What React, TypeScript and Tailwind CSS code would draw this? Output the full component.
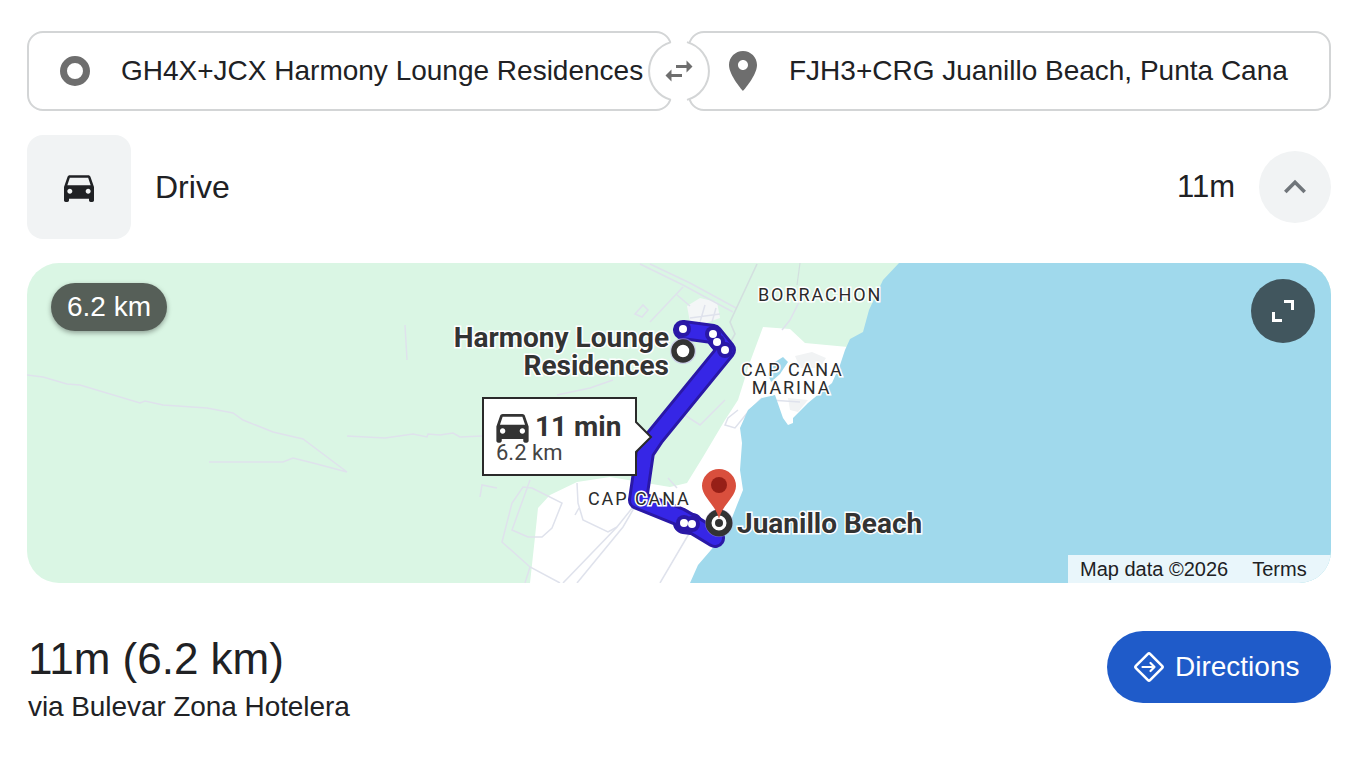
import React from "react";

const CAR =
  "M18.92 6.01C18.72 5.42 18.16 5 17.5 5h-11c-.66 0-1.21.42-1.42 1.01L3 12v8c0 .55.45 1 1 1h1c.55 0 1-.45 1-1v-1h12v1c0 .55.45 1 1 1h1c.55 0 1-.45 1-1v-8l-2.08-5.99zM6.5 16c-.83 0-1.5-.67-1.5-1.5S5.67 13 6.5 13s1.5.67 1.5 1.5S7.33 16 6.5 16zm11 0c-.83 0-1.5-.67-1.5-1.5s.67-1.5 1.5-1.5 1.5.67 1.5 1.5-.67 1.5-1.5 1.5zM5 11l1.5-4.5h11L19 11H5z";

function SwapBadge() {
  return (
    <svg width="64" height="64" viewBox="0 0 64 64" className="absolute left-1/2 top-1/2 -translate-x-1/2 -translate-y-1/2">
      <circle cx="32" cy="32" r="30" fill="#fff" />
      <path d="M24 3.1 A30 30 0 0 0 24 60.9" fill="none" stroke="#d3d5d6" strokeWidth="2" />
      <path d="M40 3.1 A30 30 0 0 1 40 60.9" fill="none" stroke="#d3d5d6" strokeWidth="2" />
      <g transform="translate(14 14) scale(1.5)">
        <path d="M6.99 11L3 15l3.99 4v-3H14v-2H6.99v-3zM21 9l-3.99-4v3H10v2h7.01v3L21 9z" fill="#6e6e6e" />
      </g>
    </svg>
  );
}

function MapDrawing() {
  const route = "M683 330 L713 334 L726 350 L655 437 L645 452 L638 500 L680 517 L692 524 L715 538";
  const roads: string[] = [
    "M27 375 L43 377 L67 384 L80 385 L140 403 L145 401 L163 405 L207 408 L233 413 L243 420 L273 432 L303 439 L347 472 L313 463 L293 458 L283 462 L209 462",
    "M347 436 L385 438 L413 434 L427 437 L428 434 L440 435 L453 433 L460 437 L482 436",
    "M640 264 L683 285 L733 312",
    "M650 264 L690 283 L736 308",
    "M683 287 L650 322",
    "M677 295 L690 306",
    "M700 322 L705 305 M712 322 L716 308 M690 318 L720 314",
    "M480 497 L482 485 L497 488",
    "M530 480 L512 530 L528 537 L542 537 L552 528 L562 503 L532 488 L523 487 L512 503 L502 542 L530 567 L560 583",
    "M530 567 L525 583",
    "M563 583 L617 527 L633 507",
    "M577 583 L623 527 L637 503",
    "M577 483 L578 503 L583 520 L608 532 L617 527",
    "M575 515 L579 508",
    "M660 583 L687 537 L695 525",
    "M668 478 L677 488",
    "M738 410 L728 418 L725 425 L735 428 L748 412 L762 398",
    "M770 400 L800 402",
    "M405 325 L407 360",
    "M557 395 L590 388 L613 380",
    "M725 400 L700 425 L680 412",
    "M800 300 L790 320 L782 330",
  ];
  return (
    <svg viewBox="27 263 1304 320" className="absolute inset-0 h-full w-full">
      <polygon
        fill="#ffffff"
        points="530,583 535,537 538,508 550,495 577,482 610,477 670,487 687,483 703,457 725,420 738,400 750,362 763,327 790,329 805,343 848,347 860,400 760,583"
      />
      <polygon fill="#f4f6f7" points="687,306 700,298 717,302 720,318 700,325 690,322" />
      <polygon fill="none" stroke="#dfe2ec" strokeWidth="1.6" points="635,314 643,305 648,310 642,317" />
      <polygon fill="#f1f3f4" points="795,356 812,352 826,358 820,368 800,368" />
      <polygon fill="#f1f3f4" points="788,398 808,400 798,412 790,410" />
      {roads.map((d, i) => (
        <path key={i} d={d} fill="none" stroke="#dfe2ec" strokeWidth="1.5" />
      ))}
      <path d="M757 264 L730 322 L735 334 L730 343" fill="none" stroke="#d3dfdf" strokeWidth="1.6" />
      <path d="M800 263 L797 285" fill="none" stroke="#d3dfdf" strokeWidth="1.2" />
      <polygon
        fill="#a0d9ec"
        points="899,263 883,280 869,310 863,332 850,339 845,350 840,365 832,383 808,403 793,418 793,423 788,425 783,418 775,395 762,398 748,410 740,428 742,443 740,470 743,490 737,505 730,523 717,543 698,565 690,583 1331,583 1331,263"
      />
      <path d="M775 362 L783 357 L788 362 L780 374 L771 382 L768 374 Z" fill="#a0d9ec" />
      <path d={route} fill="none" stroke="#2a18a6" strokeWidth="20" strokeLinejoin="round" strokeLinecap="round" />
      <path d="M684 523 L692 524" fill="none" stroke="#2a18a6" strokeWidth="22" strokeLinecap="round" />
      <path d={route} fill="none" stroke="#3626e6" strokeWidth="14" strokeLinejoin="round" strokeLinecap="round" />
      <g fill="#2a18a6">
        <circle cx="683" cy="329" r="8" />
        <circle cx="713" cy="334" r="8" />
        <circle cx="717" cy="342" r="8" />
        <circle cx="725" cy="350" r="8" />
        <circle cx="684" cy="523" r="8" />
        <circle cx="692" cy="524" r="8" />
      </g>
      <g fill="#ffffff">
        <circle cx="683" cy="329" r="4" />
        <circle cx="713" cy="334" r="4" />
        <circle cx="717" cy="342" r="4" />
        <circle cx="725" cy="350" r="4" />
        <circle cx="684" cy="523" r="4" />
        <circle cx="692" cy="524" r="4" />
      </g>
      <circle cx="683" cy="351" r="13" fill="#b9a8e8" fillOpacity="0.5" />
      <circle cx="683" cy="351" r="9" fill="#fff" stroke="#333" strokeWidth="5.5" />
      <circle cx="719" cy="523" r="14" fill="#b9a8e8" fillOpacity="0.5" />
      <circle cx="719" cy="523" r="10.5" fill="#fff" stroke="#333" strokeWidth="6" />
      <circle cx="719" cy="523" r="4" fill="#333" />
      <path d="M719 519 C716 505 702 497 702 486 A17 17 0 0 1 736 486 C736 497 722 505 719 519 Z" fill="#d94f3d" />
      <circle cx="719" cy="485" r="8" fill="#971f17" />
      <polygon
        points="483,398 636,398 636,422 651,437 636,452 636,475 483,475"
        fill="#ffffff"
        stroke="#2a2a2a"
        strokeWidth="2"
      />
    </svg>
  );
}

const bigLabel =
  "absolute font-['Roboto',sans-serif] font-bold text-[#333] leading-none whitespace-nowrap [-webkit-text-stroke:3px_white] [paint-order:stroke_fill]";
const areaLabel =
  "absolute font-['Roboto',sans-serif] font-normal text-[18px] tracking-[1.9px] text-[#2b2b2b] leading-none whitespace-nowrap [-webkit-text-stroke:3px_white] [paint-order:stroke_fill]";

export default function App() {
  return (
    <div className="min-h-[767px] bg-white pl-[27px] pr-[29px] pt-[31px] font-['Liberation_Sans',Arial,sans-serif] text-[#202124] overflow-hidden">
      {/* Route inputs */}
      <div className="relative flex h-[80px] gap-4">
        <div className="flex flex-1 items-center rounded-[16px] border-2 border-[#d3d5d6] pl-[31px]">
          <span className="h-[30px] w-[30px] rounded-full border-[7px] border-[#6e6e6e]" />
          <span className="ml-[31px] text-[28px] whitespace-nowrap">GH4X+JCX Harmony Lounge Residences</span>
        </div>
        <div className="flex flex-1 items-center rounded-[16px] border-2 border-[#d3d5d6] pl-[29px]">
          <svg width="48" height="48" viewBox="0 0 24 24" fill="#6e6e6e">
            <path d="M12 2C8.13 2 5 5.13 5 9c0 5.25 7 13 7 13s7-7.75 7-13c0-3.87-3.13-7-7-7zm0 9.5c-1.38 0-2.5-1.12-2.5-2.5s1.12-2.5 2.5-2.5 2.5 1.12 2.5 2.5-1.12 2.5-2.5 2.5z" />
          </svg>
          <span className="ml-[22px] text-[28px] whitespace-nowrap">FJH3+CRG Juanillo Beach, Punta Cana</span>
        </div>
        <SwapBadge />
      </div>

      {/* Drive row */}
      <div className="mt-[24px] flex h-[104px] items-center">
        <div className="flex h-[104px] w-[104px] items-center justify-center rounded-[16px] bg-[#f1f3f4]">
          <svg width="40" height="40" viewBox="0 0 24 24" fill="#202124">
            <path d={CAR} />
          </svg>
        </div>
        <span className="ml-6 text-[32px]">Drive</span>
        <span className="ml-auto text-[31px]">11m</span>
        <div className="ml-6 flex h-[72px] w-[72px] items-center justify-center rounded-full bg-[#f1f3f4]">
          <svg width="44" height="44" viewBox="0 0 24 24" fill="#70757a">
            <path d="M12 8l-6 6 1.41 1.41L12 10.83l4.59 4.58L18 14z" />
          </svg>
        </div>
      </div>

      {/* Map */}
      <div className="relative mt-6 h-[320px] overflow-hidden rounded-[32px] bg-[#daf6e4]">
        <MapDrawing />
        <div className="absolute left-6 top-5 flex h-12 w-[116px] items-center justify-center rounded-full bg-[#565f58] text-[28px] text-white shadow-[0_2px_5px_rgba(0,0,0,0.35)]">
          6.2 km
        </div>
        <div className="absolute right-4 top-4 flex h-16 w-16 items-center justify-center rounded-full bg-[#41565e]">
          <svg width="24" height="24" viewBox="0 0 24 24" fill="none" stroke="#fff" strokeWidth="3">
            <path d="M13 2.5H21.5V11" />
            <path d="M2.5 13V21.5H11" />
          </svg>
        </div>
        <div className={`${bigLabel} right-[662px] top-[61px] text-right text-[28px] leading-[28px]`}>
          Harmony Lounge
          <br />
          Residences
        </div>
        <div className={`${bigLabel} left-[710px] top-[247px] text-[28px]`}>Juanillo Beach</div>
        <div className={`${areaLabel} left-[731px] top-[23px]`}>BORRACHON</div>
        <div className={`${areaLabel} left-[714px] top-[98px] w-[101px] text-center leading-[18px]`}>
          CAP CANA
          <br />
          MARINA
        </div>
        <div className={`${areaLabel} left-[561px] top-[227px]`}>CAP CANA</div>

        {/* Travel time callout */}
        <div className="absolute left-[464px] top-[142px] flex items-center font-['Roboto',sans-serif] text-[#333]">
          <svg width="43" height="43" viewBox="0 0 24 24" fill="#333">
            <path d={CAR} />
          </svg>
          <span className="ml-[1px] text-[28px] font-bold leading-none">11 min</span>
        </div>
        <div className="absolute left-[469px] top-[179px] font-['Roboto',sans-serif] text-[22px] leading-none text-[#444]">
          6.2 km
        </div>

        <div className="absolute bottom-0 right-0 flex h-7 w-[263px] items-center gap-[24px] bg-[#e9f6fb] pl-3 text-[20px] text-[#202124]">
          <span>Map data ©2026</span>
          <span>Terms</span>
        </div>
      </div>

      {/* Summary */}
      <div className="mt-12 flex items-start justify-between">
        <div className="pl-[1px]">
          <div className="text-[44px] leading-[52px] mt-[2px]">11m (6.2 km)</div>
          <div className="mt-[5px] text-[28px] leading-[34px] tracking-[-0.08px]">via Bulevar Zona Hotelera</div>
        </div>
        <button className="flex h-[72px] w-[224px] items-center justify-start gap-[10px] rounded-full bg-[#1f5bc9] pl-[26px] text-[28px] text-white">
          <svg width="32" height="32" viewBox="0 0 32 32" fill="none" stroke="#fff" strokeWidth="2.6" strokeLinejoin="round" strokeLinecap="round">
            <rect x="6" y="6" width="20" height="20" rx="1.5" transform="rotate(45 16 16)" />
            <path d="M9.5 16H21.5M17.5 12l4 4-4 4" strokeWidth="2.2" />
          </svg>
          Directions
        </button>
      </div>
    </div>
  );
}
